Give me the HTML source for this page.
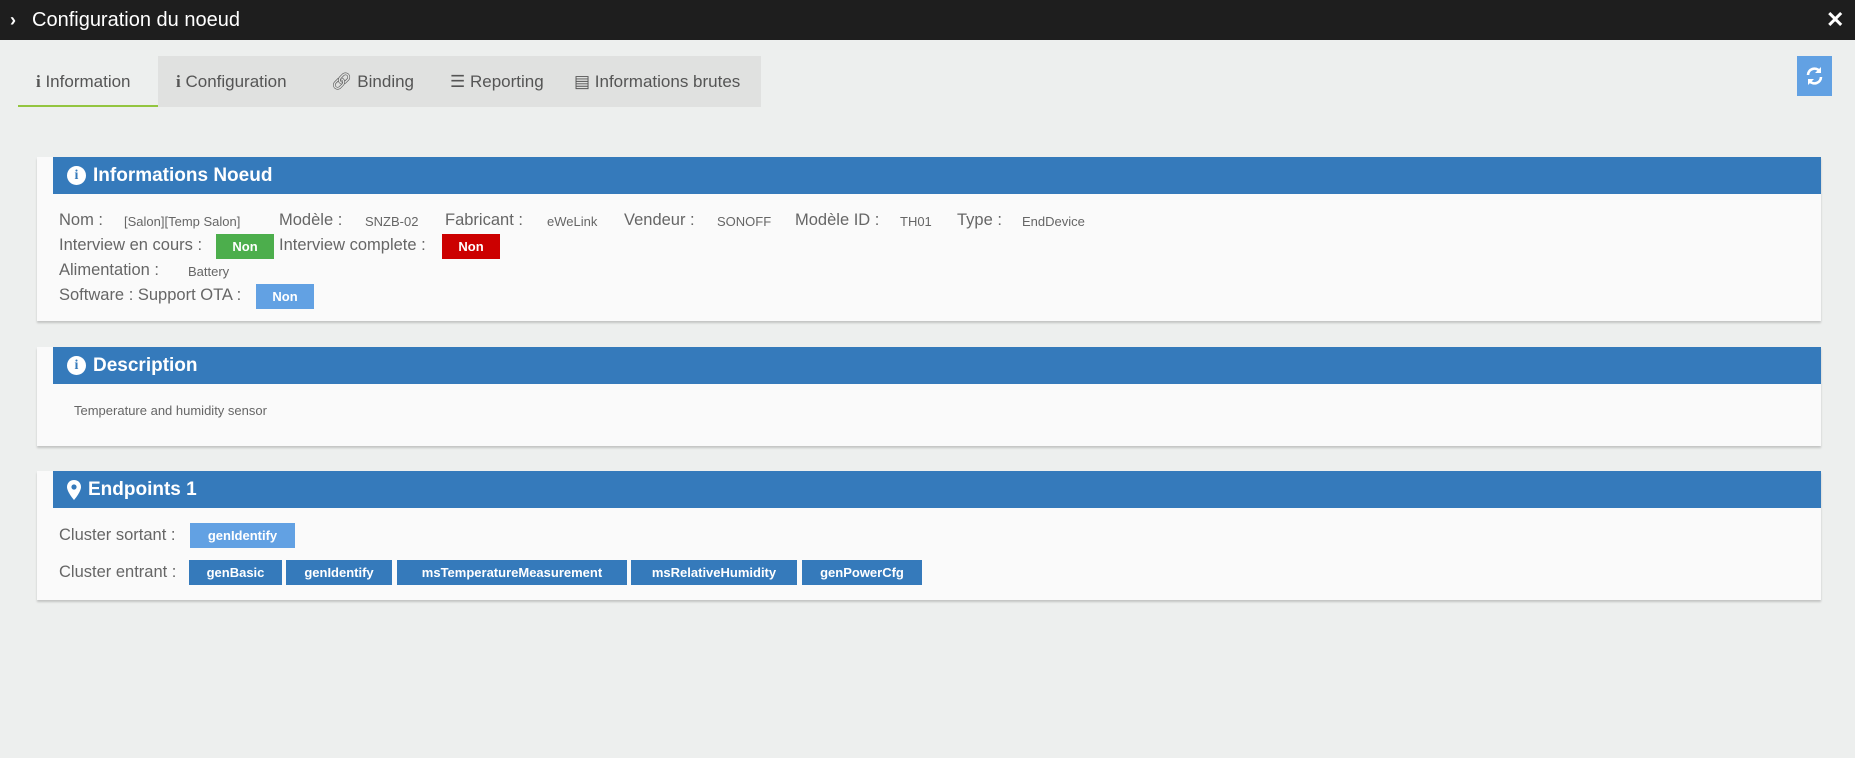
<!DOCTYPE html>
<html><head><meta charset="utf-8"><style>
*{box-sizing:border-box;margin:0;padding:0}
body{width:1855px;height:758px;background:#edefee;font-family:"Liberation Sans",sans-serif;position:relative;overflow:hidden;color:#666}
.top{position:absolute;left:0;top:0;width:1855px;height:40px;background:#1e1e1e;color:#fff;font-size:20px;line-height:40px}
.top .t{position:absolute;left:32px}
.tabs{position:absolute;left:18px;top:56px;height:51px;width:743px;background:#e0e1e0}
.tab{position:absolute;top:0;height:51px;line-height:51px;font-size:17px;color:#555;white-space:nowrap}
.tab.act{background:#edefee;border-bottom:2px solid #93c53f}
.card{position:absolute;left:37px;width:1784px;background:#fafafa;box-shadow:0 2px 2px rgba(0,0,0,.18)}
.hd{position:absolute;left:16px;right:0;top:0;height:37px;background:#357abb;color:#fff;font-size:19px;font-weight:bold;line-height:37px;padding-left:40px}
.a{position:absolute;white-space:nowrap}
.l{font-size:16.5px;color:#666}
.v{font-size:13px;color:#666}
.b{position:absolute;height:25px;line-height:25px;color:#fff;font-size:13px;font-weight:bold;text-align:center}
.ic{position:absolute;left:14px;top:9px;width:19px;height:19px;border-radius:50%;background:#fff;color:#357abb;font:bold 14px/19px "Liberation Serif",serif;text-align:center}
</style></head><body>
<div class="top"><span style="position:absolute;left:10px;font-weight:bold;font-size:18px">›</span><span class="t">Configuration du noeud</span><span style="position:absolute;left:1826px;font-size:22px;font-weight:bold">✕</span></div>
<div class="tabs">
<div class="tab act" style="left:0;width:140px;padding-left:18px"><b style="font-family:'Liberation Serif'">i</b> Information</div>
<div class="tab" style="left:158px;padding-left:0"><b style="font-family:'Liberation Serif'">i</b> Configuration</div>
<div class="tab" style="left:313px">🔗︎ Binding</div>
<div class="tab" style="left:432px">☰ Reporting</div>
<div class="tab" style="left:556px">▤ Informations brutes</div>
</div>
<div style="position:absolute;left:1797px;top:56px;width:35px;height:40px;background:#62a1e3">
<svg width="35" height="40" viewBox="0 0 35 40"><g fill="none" stroke="#fff" stroke-width="2.6"><path d="M11 19a6.5 6.5 0 0 1 11.5-4"/><path d="M24 21a6.5 6.5 0 0 1-11.5 4"/></g><path d="M24 11v6h-6z M11 29v-6h6z" fill="#fff"/></svg></div>

<div class="card" style="top:157px;height:164px">
<div class="hd"><span class="ic">i</span>Informations Noeud</div>
<div class="a l" style="left:22px;top:54px">Nom :</div><div class="a v" style="left:87px;top:57px">[Salon][Temp Salon]</div>
<div class="a l" style="left:242px;top:54px">Modèle :</div><div class="a v" style="left:328px;top:57px">SNZB-02</div>
<div class="a l" style="left:408px;top:54px">Fabricant :</div><div class="a v" style="left:510px;top:57px">eWeLink</div>
<div class="a l" style="left:587px;top:54px">Vendeur :</div><div class="a v" style="left:680px;top:57px">SONOFF</div>
<div class="a l" style="left:758px;top:54px">Modèle ID :</div><div class="a v" style="left:863px;top:57px">TH01</div>
<div class="a l" style="left:920px;top:54px">Type :</div><div class="a v" style="left:985px;top:57px">EndDevice</div>
<div class="a l" style="left:22px;top:79px">Interview en cours :</div>
<div class="b" style="left:179px;top:77px;width:58px;background:#4cae4c">Non</div>
<div class="a l" style="left:242px;top:79px">Interview complete :</div>
<div class="b" style="left:405px;top:77px;width:58px;background:#c00">Non</div>
<div class="a l" style="left:22px;top:104px">Alimentation :</div><div class="a v" style="left:151px;top:107px">Battery</div>
<div class="a l" style="left:22px;top:129px">Software : Support OTA :</div>
<div class="b" style="left:219px;top:127px;width:58px;background:#62a1e3">Non</div>
</div>

<div class="card" style="top:347px;height:99px">
<div class="hd"><span class="ic">i</span>Description</div>
<div class="a v" style="left:37px;top:56px">Temperature and humidity sensor</div>
</div>

<div class="card" style="top:471px;height:129px">
<div class="hd" style="padding-left:35px"><svg style="position:absolute;left:14px;top:9px" width="14" height="20" viewBox="0 0 14 20"><path d="M7 0C3 0 0 3 0 7c0 5 7 13 7 13s7-8 7-13c0-4-3-7-7-7z" fill="#fff"/><circle cx="7" cy="7" r="2.6" fill="#357abb"/></svg>Endpoints 1</div>
<div class="a l" style="left:22px;top:55px">Cluster sortant :</div>
<div class="b" style="left:153px;top:52px;width:105px;background:#62a1e3">genIdentify</div>
<div class="a l" style="left:22px;top:92px">Cluster entrant :</div>
<div class="b" style="left:152px;top:89px;width:93px;background:#357abb">genBasic</div>
<div class="b" style="left:249px;top:89px;width:106px;background:#357abb">genIdentify</div>
<div class="b" style="left:360px;top:89px;width:230px;background:#357abb">msTemperatureMeasurement</div>
<div class="b" style="left:594px;top:89px;width:166px;background:#357abb">msRelativeHumidity</div>
<div class="b" style="left:765px;top:89px;width:120px;background:#357abb">genPowerCfg</div>
</div>
</body></html>
